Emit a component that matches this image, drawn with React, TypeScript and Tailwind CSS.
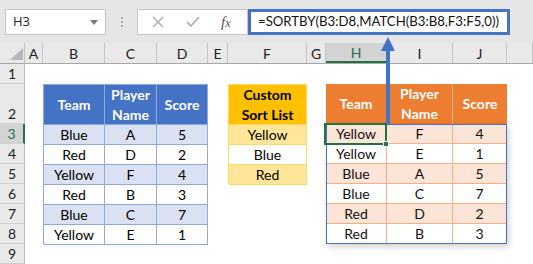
import React from "react";

const headerCols: { label: string; w: string; active?: boolean }[] = [
  { label: "A", w: "w-[18px]" },
  { label: "B", w: "w-[62px]" },
  { label: "C", w: "w-[52px]" },
  { label: "D", w: "w-[51px]" },
  { label: "E", w: "w-[20px]" },
  { label: "F", w: "w-[79px]" },
  { label: "G", w: "w-[19px]" },
  { label: "H", w: "w-[61px]", active: true },
  { label: "I", w: "w-[66px]" },
  { label: "J", w: "w-[54px]" },
  { label: "", w: "flex-1" },
];

const rowHeads = [
  { n: "1", h: "h-[20px]" },
  { n: "2", h: "h-[40px]" },
  { n: "3", h: "h-[20px]", active: true },
  { n: "4", h: "h-[20px]" },
  { n: "5", h: "h-[20px]" },
  { n: "6", h: "h-[20px]" },
  { n: "7", h: "h-[20px]" },
  { n: "8", h: "h-[20px]" },
  { n: "9", h: "h-[20px]" },
];

const players = [
  ["Blue", "A", "5"],
  ["Red", "D", "2"],
  ["Yellow", "F", "4"],
  ["Red", "B", "3"],
  ["Blue", "C", "7"],
  ["Yellow", "E", "1"],
];

const sorted = [
  ["Yellow", "F", "4"],
  ["Yellow", "E", "1"],
  ["Blue", "A", "5"],
  ["Blue", "C", "7"],
  ["Red", "D", "2"],
  ["Red", "B", "3"],
];

const sortList = ["Yellow", "Blue", "Red"];

const FormulaBar = () => (
  <div className="h-[43px] bg-[#e6e6e6] flex items-start pt-[9px]">
    <div className="ml-[5px] w-[101px] h-[26px] bg-white border border-[#c6c6c6] flex items-center justify-between pl-[7px] pr-[7px]">
      <span className="font-['Open_Sans',sans-serif] text-[13px] text-[#222]">H3</span>
      <svg width="8" height="5" viewBox="0 0 8 5">
        <polygon points="0,0 8,0 4,5" fill="#7a7a7a" />
      </svg>
    </div>
    <div className="ml-[15px] mt-[8px] flex flex-col gap-[2px]">
      <div className="w-[2px] h-[2px] bg-[#a8a8a8]" />
      <div className="w-[2px] h-[2px] bg-[#a8a8a8]" />
      <div className="w-[2px] h-[2px] bg-[#a8a8a8]" />
    </div>
    <div className="ml-[14px] w-[111px] h-[26px] bg-white border border-[#c6c6c6] flex items-center">
      <svg className="ml-[14px]" width="12" height="12" viewBox="0 0 12 12">
        <path d="M1 1 L11 11 M11 1 L1 11" stroke="#b3b3b3" strokeWidth="1.6" />
      </svg>
      <svg className="ml-[22px]" width="14" height="12" viewBox="0 0 14 12">
        <path d="M1 6 L5 10 L13 1" stroke="#b3b3b3" strokeWidth="1.8" fill="none" />
      </svg>
      <span className="ml-[21px] font-['Liberation_Serif',serif] italic text-[15px] text-[#555] leading-none">
        f<span className="text-[12px]">x</span>
      </span>
    </div>
    <div className="w-[262px] h-[26px] bg-white border-[3px] border-[#4472c4] flex items-center pl-[7px]">
      <span className="font-['Lato',sans-serif] text-[13.2px] text-[#111] whitespace-nowrap">
        =SORTBY(B3:D8,MATCH(B3:B8,F3:F5,0))
      </span>
    </div>
  </div>
);

const ColumnHeaders = () => (
  <div className="flex h-[21px] bg-[#e9e9e9] border-b border-[#a9a9a9] font-['Lato',sans-serif] text-[14px] text-[#222]">
    <div className="w-[25px] border-r border-[#c4c4c4] relative">
      <svg className="absolute left-[10px] top-[5px]" width="13" height="12" viewBox="0 0 13 12">
        <polygon points="13,0 13,12 0,12" fill="#b7b7b7" />
      </svg>
    </div>
    {headerCols.map((c) => (
      <div
        key={c.label + c.w}
        className={`${c.w} flex items-center justify-center border-r border-[#c4c4c4] ${
          c.active ? "bg-[#d3d3d3] text-[#217346] border-b-2 border-b-[#217346]" : ""
        }`}
      >
        {c.label}
      </div>
    ))}
  </div>
);

const LeftTable = () => (
  <div className="col-start-2 col-span-3 row-start-2 row-span-7 border-l border-t border-[#8ea9db] grid grid-cols-[61px_52px_51px] grid-rows-[40px_repeat(6,20px)]">
    {["Team", "Player Name", "Score"].map((h) => (
      <div
        key={h}
        className="bg-[#4472c4] text-white font-bold border-r border-b border-[#8ea9db] flex items-center justify-center text-center leading-[20px] px-[6px]"
      >
        {h}
      </div>
    ))}
    {players.map((r, i) =>
      r.map((v, j) => (
        <div
          key={i + "-" + j}
          className={`${
            i % 2 === 0 ? "bg-[#d9e1f2]" : "bg-white"
          } border-r border-b border-[#8ea9db] flex items-center justify-center`}
        >
          {v}
        </div>
      ))
    )}
  </div>
);

const SortList = () => (
  <div className="col-start-6 row-start-2 row-span-4 border-l border-t border-[#ffd966] grid grid-cols-[78px] grid-rows-[40px_repeat(3,20px)]">
    <div className="bg-[#ffc000] font-bold text-black border-r border-b border-[#ffd966] flex items-center justify-center text-center leading-[20px]">
      Custom
      <br />
      Sort List
    </div>
    {sortList.map((v, i) => (
      <div
        key={v}
        className={`${
          i % 2 === 0 ? "bg-[#ffe699]" : "bg-white"
        } border-r border-b border-[#ffd966] flex items-center justify-center`}
      >
        {v}
      </div>
    ))}
  </div>
);

const RightTable = () => (
  <div className="relative col-start-8 col-span-3 row-start-2 row-span-7 flex flex-col">
    <div className="grid grid-cols-[61px_66px_54px] h-[40px] bg-[#ed7d31]">
      {["Team", "Player Name", "Score"].map((h) => (
        <div
          key={h}
          className="text-white font-bold border-r border-[#f4b084] last:border-r-0 flex items-center justify-center text-center leading-[20px] px-[8px]"
        >
          {h}
        </div>
      ))}
    </div>
    <div className="relative grid grid-cols-[61px_66px_54px] grid-rows-[repeat(6,20px)] shadow-[2px_3px_6px_rgba(0,0,0,0.18)]">
      {sorted.map((r, i) =>
        r.map((v, j) => (
          <div
            key={i + "-" + j}
            className={`${
              i % 2 === 0 ? "bg-[#fce4d6]" : "bg-white"
            } border-r border-b border-[#f4b084] flex items-center justify-center text-[#111]`}
          >
            {v}
          </div>
        ))
      )}
      <div className="absolute inset-0 border border-[#4472c4] pointer-events-none" />
      <div className="absolute left-[-2px] top-[-1px] w-[63px] h-[22px] border-2 border-[#217346] pointer-events-none">
        <div className="absolute right-[-4px] bottom-[-4px] w-[6px] h-[6px] bg-[#217346] border border-white" />
      </div>
    </div>
  </div>
);

export default function App() {
  return (
    <div className="w-[533px] h-[264px] overflow-hidden bg-white relative">
      <FormulaBar />
      <ColumnHeaders />
      <div className="flex">
        <div className="w-[25px] flex flex-col bg-[#e9e9e9] border-r border-[#bdbdbd] font-['Lato',sans-serif] text-[14px] text-[#222]">
          {rowHeads.map((r) => (
            <div
              key={r.n}
              className={`${r.h} flex items-end justify-center border-b border-[#d0d0d0] leading-[19px] ${
                r.active ? "bg-[#d3d3d3] text-[#217346] -mr-px border-r-2 border-r-[#217346]" : ""
              }`}
            >
              {r.n}
            </div>
          ))}
        </div>
        <div className="flex-1 grid grid-cols-[18px_62px_52px_51px_20px_79px_19px_61px_66px_54px_1fr] grid-rows-[20px_40px_repeat(7,20px)] font-['Lato',sans-serif] text-[14px] text-black">
          <LeftTable />
          <SortList />
          <RightTable />
        </div>
      </div>
      <svg className="absolute left-[380px] top-[36px]" width="16" height="88" viewBox="0 0 16 88">
        <polygon points="8,1 15,15 1,15" fill="#4472c4" />
        <rect x="6" y="14" width="4" height="74" fill="#4472c4" />
      </svg>
    </div>
  );
}
